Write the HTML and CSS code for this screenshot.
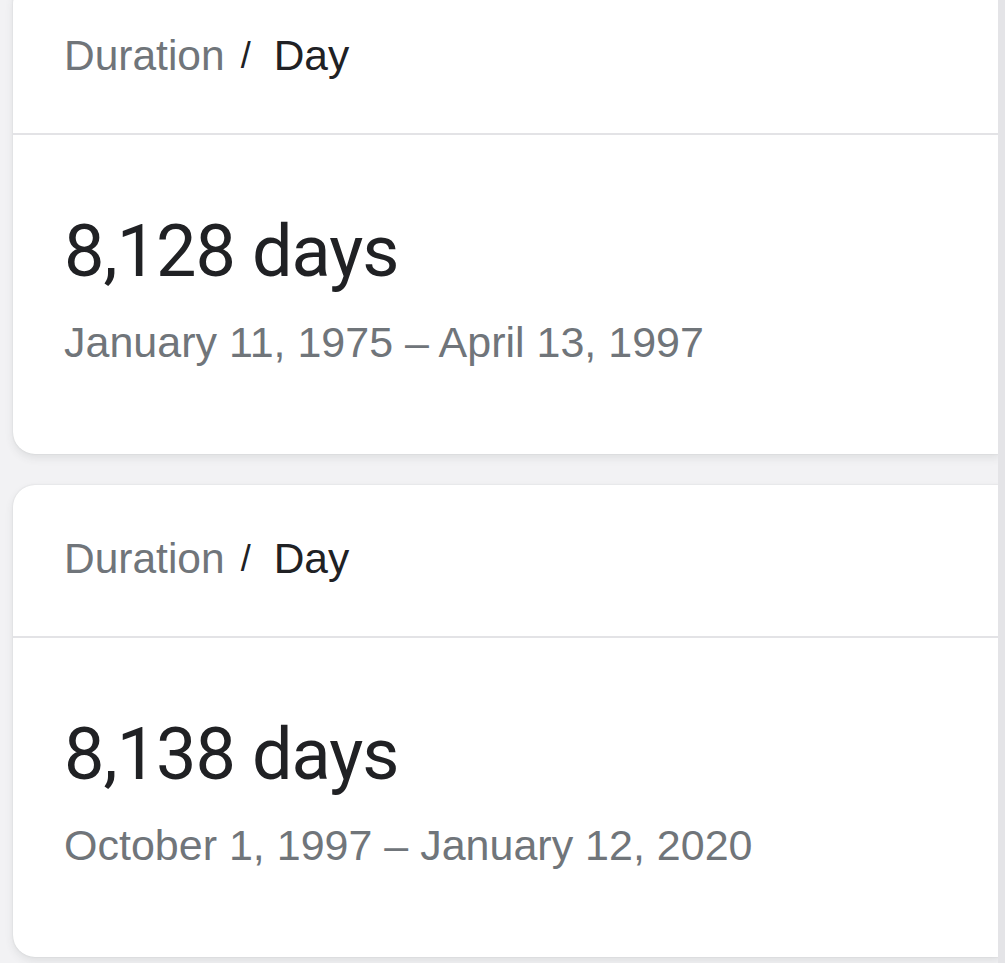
FILE: index.html
```html
<!DOCTYPE html>
<html>
<head>
<meta charset="utf-8">
<link rel="stylesheet" href="styles.css">
</head>
<body>
<div class="screen">
  <div class="list">
    <div class="card">
      <div class="head"><span class="crumb">Duration</span><span class="sep">/</span><span class="cur">Day</span></div>
      <div class="body">
        <div class="value">8,128 days</div>
        <div class="range">January 11, 1975 – April 13, 1997</div>
      </div>
    </div>
    <div class="card">
      <div class="head"><span class="crumb">Duration</span><span class="sep">/</span><span class="cur">Day</span></div>
      <div class="body">
        <div class="value">8,138 days</div>
        <div class="range">October 1, 1997 – January 12, 2020</div>
      </div>
    </div>
  </div>
  <div class="edge"></div>
</div>
</body>
</html>
```
FILE: styles.css
```css
html, body {
  margin: 0;
  padding: 0;
  background: #f2f2f4;
  overflow: hidden;
}
.screen {
  display: flex;
  height: 963px;
}
.list {
  flex: 1;
  min-width: 0;
  overflow: hidden;
  display: flex;
  flex-direction: column;
  gap: 31px;
  padding-left: 13px;
  margin-top: -18px;
  padding-bottom: 12px;
}
.edge {
  flex: none;
  width: 7px;
  background: #e4e4e7;
}
.card {
  flex: none;
  background: #fff;
  border-radius: 22px 0 0 22px;
  margin-right: -2px;
  box-shadow: 0 4px 8px rgba(60, 64, 67, 0.10), 0 0 2px rgba(60, 64, 67, 0.14);
}
.head {
  height: 153px;
  display: flex;
  align-items: center;
  padding-left: 51px;
  padding-bottom: 4px;
  font-family: "Liberation Sans", Arial, sans-serif;
  font-size: 42.5px;
  border-bottom: 2px solid #e3e3e6;
  box-sizing: border-box;
}
.crumb { color: #70757a; }
.sep { color: #202124; font-size: 36px; margin: 0 23px 0 16px; }
.cur { color: #202124; }
.body {
  padding: 77px 0 0 51px;
  height: 319px;
  box-sizing: border-box;
}
.value {
  font-family: Roboto, "Liberation Sans", sans-serif;
  font-size: 72px;
  letter-spacing: -1px;
  color: #202124;
  line-height: 80px;
}
.range {
  font-family: "Liberation Sans", Arial, sans-serif;
  font-size: 43px;
  color: #70757a;
  line-height: 50px;
  margin-top: 25px;
}
```
